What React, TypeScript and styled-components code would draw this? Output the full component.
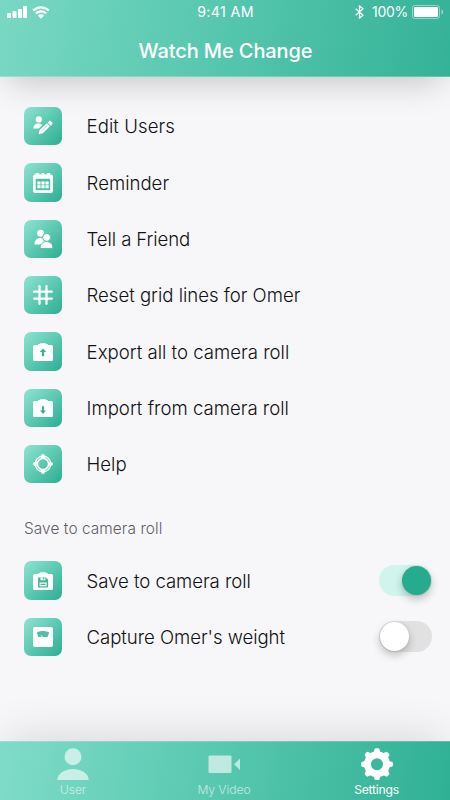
import React from "react";
import styled, { createGlobalStyle } from "styled-components";

const GlobalStyle = createGlobalStyle`
  * { box-sizing: border-box; }
  body {
    margin: 0;
    background: #f7f7fa;
    font-family: Inter, "Liberation Sans", sans-serif;
  }
`;

const Screen = styled.div`
  width: 450px;
  height: 800px;
  display: flex;
  flex-direction: column;
  overflow: hidden;
  background: #f7f7fa;
  color: #121212;
`;

const Header = styled.header`
  flex: none;
  height: 77px;
  background: linear-gradient(100deg, #79d8c3 0%, #57c7af 48%, #34b297 100%);
  border-bottom: 1px solid rgba(255, 255, 255, 0.22);
  box-shadow: 0 12px 34px -8px rgba(0, 0, 0, 0.22);
  color: #fff;
`;

const StatusBar = styled.div`
  height: 24px;
  padding: 0 6px 0 7px;
  display: grid;
  grid-template-columns: 1fr auto 1fr;
  align-items: center;
  font-size: 14px;
  line-height: 24px;
`;

const StatusLeft = styled.div`
  display: flex;
  align-items: center;
  gap: 4px;
`;

const StatusRight = styled.div`
  display: flex;
  align-items: center;
  justify-content: flex-end;
`;

const Clock = styled.span`
  font-size: 14.2px;
  letter-spacing: 0.35px;
`;

const Percent = styled.span`
  margin: 0 4px 0 8px;
  font-size: 14px;
  letter-spacing: -0.3px;
`;

const Title = styled.h1`
  margin: 0;
  height: 52px;
  padding-left: 1px;
  line-height: 54px;
  text-align: center;
  font-size: 20px;
  font-weight: 550;
  letter-spacing: -0.1px;
`;

const Content = styled.main`
  flex: 1;
  padding: 21px 18px 0 24px;
`;

const Row = styled.div`
  height: 56.35px;
  display: flex;
  align-items: center;
`;

const Tile = styled.div`
  flex: none;
  width: 38.4px;
  height: 38.4px;
  margin-right: 24.2px;
  border-radius: 7px;
  background: linear-gradient(135deg, #8fe3d1 0%, #5cc9b1 50%, #2bae92 100%);
  display: flex;
  align-items: center;
  justify-content: center;
  svg { display: block; }
`;

const Label = styled.span<{ $track: number }>`
  flex: 1;
  white-space: nowrap;
  font-size: 18.6px;
  font-weight: 300;
  line-height: 24px;
  letter-spacing: ${(p) => p.$track}px;
`;

const SectionTitle = styled.h2`
  margin: 0;
  height: 60px;
  padding-top: 25px;
  font-size: 15.4px;
  line-height: 24px;
  font-weight: 300;
  color: #606064;
  letter-spacing: 0.08px;
`;

const Switch = styled.button<{ $on: boolean }>`
  width: 53px;
  height: 31px;
  padding: 0 1px;
  border: 0;
  border-radius: 16px;
  display: flex;
  align-items: center;
  justify-content: ${(p) => (p.$on ? "flex-end" : "flex-start")};
  background: ${(p) => (p.$on ? "#d0f5ec" : "#e1e1e1")};
`;

const Knob = styled.span<{ $on: boolean }>`
  width: 29px;
  height: 29px;
  border-radius: 50%;
  background: ${(p) => (p.$on ? "#26ab8e" : "#fff")};
  box-shadow: 0 4px 9px rgba(0, 0, 0, 0.24), 0 0 2px rgba(0, 0, 0, 0.1);
`;

const TabBar = styled.nav`
  flex: none;
  height: 59px;
  display: grid;
  grid-template-columns: 146px 156px 1fr;
  background: linear-gradient(100deg, #7fdcc8 0%, #57c7af 50%, #2fb094 100%);
  border-top: 1px solid rgba(255, 255, 255, 0.2);
  box-shadow: 0 -10px 44px -6px rgba(0, 0, 0, 0.13);
`;

const Tab = styled.a<{ $active: boolean }>`
  display: flex;
  flex-direction: column;
  align-items: center;
  padding-top: 6px;
  font-size: 12.2px;
  line-height: 16px;
  font-weight: ${(p) => (p.$active ? 400 : 300)};
  letter-spacing: ${(p) => (p.$active ? -0.25 : -0.1)}px;
  color: #fff;
  opacity: ${(p) => (p.$active ? 1 : 0.62)};
  svg { display: block; margin-bottom: 1px; }
`;

const SettingsTab = styled(Tab)`
  padding-left: 1px;
`;

const Glyph = ({ children }: { children: React.ReactNode }) => (
  <svg width="20" height="20" viewBox="0 0 20 20" fill="#fff">{children}</svg>
);

const TEAL = "#4fc0a8";

const EditUsers = (
  <Glyph>
    <circle cx="5.8" cy="3.4" r="3.1" />
    <path d="M.2 12.6C.4 9 2.4 7.4 5.4 7.4c1.8 0 3 .5 4 1.6l-3.6 3.6z" />
    <path d="M5.5 18.2l1.100-4.200 7.300-6.700 3 3-7.100 6.900zM14.600 6.600l1.500-1.500c.5-.5 1.200-.5 1.700 0l1.400 1.400c.5.5.5 1.200 0 1.700l-1.500 1.500z" />
    <path d="M8.600 14.900l6-5.700" stroke={TEAL} strokeWidth=".5" />
  </Glyph>
);
const Calendar = (
  <Glyph>
    <path d="M2 1.500h.6V0h3.600v1.500h2.200V0h3v1.500h2.200V0h3.600v1.500H18a2 2 0 0 1 2 2V18a2 2 0 0 1-2 2H2a2 2 0 0 1-2-2V3.500a2 2 0 0 1 2-2z" />
    <path fill={TEAL} d="M2.700 5.800h14.500v11.400H2.700z" />
    <path d="M4.300 8.400h3.200v3H4.300zM8.400 8.400h3.200v3H8.400zM12.500 8.400h3.200v3h-3.200zM4.300 12.300h3.200v3H4.300zM8.400 12.300h3.200v3H8.400zM12.500 12.300h3.200v3h-3.200z" />
  </Glyph>
);
const Friends = (
  <Glyph>
    <circle cx="7.600" cy="4.200" r="3.500" />
    <path d="M1.500 15.500c0-4 2.300-6.400 6-6.400 4 0 5.800 3 5.800 6.400z" />
    <g stroke={TEAL} strokeWidth="1">
      <path d="M7 19.600c0-4.500 2.800-7 6.500-7s6.500 2.500 6.500 7z" />
      <circle cx="13.600" cy="8.400" r="4" />
    </g>
  </Glyph>
);
const Hash = (
  <Glyph>
    <path d="M6.500 1.200v17.600M13.500 1.200v17.600M1.200 6.700h17.600M1.200 13.600h17.600" stroke="#fff" strokeWidth="2.300" strokeLinecap="round" />
  </Glyph>
);
const cameraBody = "M1.500 3H5V2.300h1.500l1-1.100h5.200l1 1.100H15V3h3.500A1.500 1.500 0 0 1 20 4.500v13a1.500 1.500 0 0 1-1.500 1.500h-17A1.500 1.500 0 0 1 0 17.500v-13A1.500 1.500 0 0 1 1.500 3z";
const ExportCam = (
  <Glyph>
    <path d={cameraBody} />
    <path fill="#37b296" d="M10 6.500l3.200 3.600h-2.100v4.200H8.900v-4.200H6.800z" />
  </Glyph>
);
const ImportCam = (
  <Glyph>
    <path d={cameraBody} />
    <path fill="#37b296" d="M10 16l3-3.600h-1.900V8.300H8.900v4.100H7z" />
  </Glyph>
);
const LifeRing = (
  <Glyph>
    <circle cx="10" cy="10" r="6.600" fill="none" stroke="#fff" strokeWidth="3.600" />
    <circle cx="10" cy="10" r="6.900" fill="none" stroke={TEAL} strokeWidth=".8" strokeDasharray="6 4.840" strokeDashoffset="-2.420" />
    <rect x="8.200" y=".2" width="3.600" height="3.400" rx="1.200" />
    <rect x="8.200" y="16.400" width="3.600" height="3.400" rx="1.200" />
    <rect x=".2" y="8.200" width="3.400" height="3.600" rx="1.200" />
    <rect x="16.400" y="8.200" width="3.400" height="3.600" rx="1.200" />
  </Glyph>
);
const SaveCam = (
  <Glyph>
    <path d={cameraBody} />
    <path fill="#43b89e" d="M5 6.500h7.800l2.300 2v8H5z" />
    <path d="M7.500 6.500h4.800v2.800H7.500zM6.600 11.500h6.900v3.700H6.600z" />
    <path fill="#43b89e" d="M9.800 6.500h1.500v1.700H9.800zM7.500 12.700h5v1.200h-5z" />
  </Glyph>
);
const Scale = (
  <Glyph>
    <rect width="20" height="20" rx="2" />
    <path fill={TEAL} d="M3.800 5.500c3.700-2 8.600-2 12.400 0l-1.700 4.600H10L7.600 7.400l1.100 2.700H5.300z" />
  </Glyph>
);

type Item = { icon: React.ReactNode; text: string; track: number; on?: boolean };

const menu: Item[] = [
  { icon: EditUsers, text: "Edit Users", track: 0.06 },
  { icon: Calendar, text: "Reminder", track: 0 },
  { icon: Friends, text: "Tell a Friend", track: -0.1 },
  { icon: Hash, text: "Reset grid lines for Omer", track: -0.02 },
  { icon: ExportCam, text: "Export all to camera roll", track: 0 },
  { icon: ImportCam, text: "Import from camera roll", track: 0 },
  { icon: LifeRing, text: "Help", track: 0 },
];

const options: Item[] = [
  { icon: SaveCam, text: "Save to camera roll", track: -0.06, on: true },
  { icon: Scale, text: "Capture Omer's weight", track: -0.05, on: false },
];

const SettingsRow = ({ icon, text, track, on }: Item) => (
  <Row>
    <Tile>{icon}</Tile>
    <Label $track={track}>{text}</Label>
    {on !== undefined && (
      <Switch $on={on} role="switch" aria-checked={on} aria-label={text}>
        <Knob $on={on} />
      </Switch>
    )}
  </Row>
);

const gearTeeth = [0, 45, 90, 135, 180, 225, 270, 315];

export default function App() {
  return (
    <>
      <GlobalStyle />
      <Screen>
        <Header>
          <StatusBar>
            <StatusLeft>
              <svg width="21" height="12" viewBox="0 0 21 12" fill="#fff">
                <rect x="0" y="7" width="4" height="5" rx="1" />
                <rect x="5.500" y="5" width="4" height="7" rx="1" />
                <rect x="11" y="3" width="4" height="9" rx="1" />
                <rect x="16" y="0" width="4" height="12" rx="1" />
              </svg>
              <svg width="18" height="13" viewBox="0 0 18 13" fill="none" stroke="#fff" strokeWidth="2.300">
                <path d="M1.200 4.600a11 11 0 0 1 15.600 0M3.900 7.500a7.200 7.200 0 0 1 10.200 0" />
                <path d="M9 12.700L5.900 9.600a4.400 4.400 0 0 1 6.200 0z" fill="#fff" stroke="none" />
              </svg>
            </StatusLeft>
            <Clock>9:41 AM</Clock>
            <StatusRight>
              <svg width="9" height="14" viewBox="0 0 9 14" fill="none" stroke="#fff" strokeWidth="1.200">
                <path d="M.7 3.700l7.300 6.500L4.500 13V1L8 3.800.7 10.300" />
              </svg>
              <Percent>100%</Percent>
              <svg width="32" height="14" viewBox="0 0 32 14" fill="none">
                <rect x=".5" y=".5" width="27" height="13" rx="2.500" stroke="#fff" strokeOpacity=".45" />
                <rect x="2" y="2" width="24" height="10" rx="1" fill="#fff" />
                <path d="M29.500 4.500c2.200.8 2.200 4.200 0 5z" fill="#fff" opacity=".5" />
              </svg>
            </StatusRight>
          </StatusBar>
          <Title>Watch Me Change</Title>
        </Header>
        <Content>
          {menu.map((item) => <SettingsRow key={item.text} {...item} />)}
          <SectionTitle>Save to camera roll</SectionTitle>
          {options.map((item) => <SettingsRow key={item.text} {...item} />)}
        </Content>
        <TabBar>
          <Tab $active={false}>
            <svg width="32" height="33" viewBox="0 0 32 33" fill="#fff">
              <circle cx="16" cy="8.700" r="8.500" />
              <path d="M.3 32c0-6 6.600-11 15.700-11s15.700 5 15.700 11z" />
            </svg>
            User
          </Tab>
          <Tab $active={false}>
            <svg width="32" height="33" viewBox="0 0 32 33" fill="#fff">
              <rect x="0.500" y="7.500" width="23" height="17.500" rx="1" />
              <path d="M32 10.500v11.500l-6-5.700z" />
            </svg>
            My Video
          </Tab>
          <SettingsTab $active>
            <svg width="32" height="33" viewBox="0 0 32 33" fill="#fff">
              <circle cx="16" cy="16.200" r="9.500" fill="none" stroke="#fff" strokeWidth="7" />
              {gearTeeth.map((angle) => (
                <path key={angle} d="M11.500 6q1.500-1.200 1.700-3.500.2-2.200 1.700-2.200h2.200q1.500 0 1.700 2.200.2 2.300 1.700 3.500z" transform={`rotate(${angle} 16 16.200)`} />
              ))}
            </svg>
            Settings
          </SettingsTab>
        </TabBar>
      </Screen>
    </>
  );
}
